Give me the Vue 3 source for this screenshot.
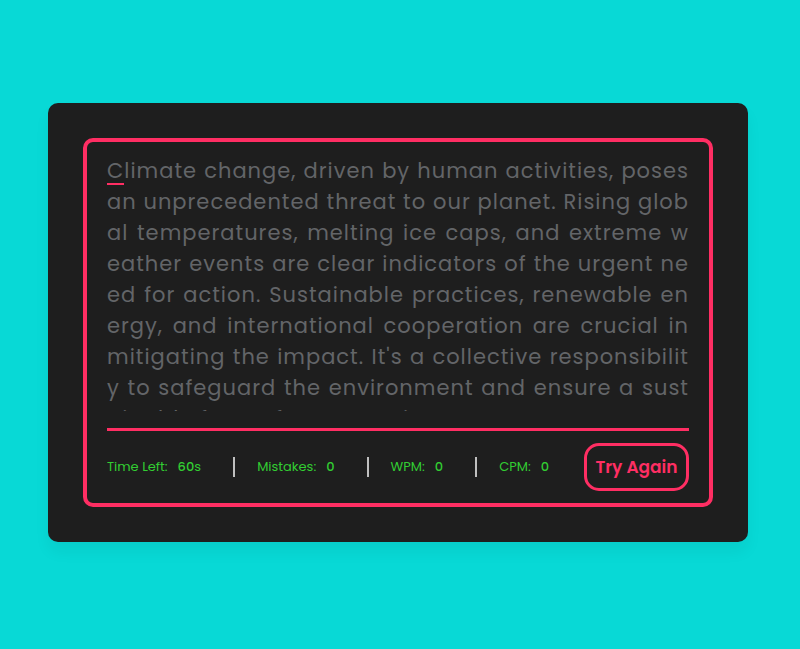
<script setup>
import { ref } from 'vue'

const lines = [
  'Climate change, driven by human activities, poses',
  'an unprecedented threat to our planet. Rising glob',
  'al temperatures, melting ice caps, and extreme w',
  'eather events are clear indicators of the urgent ne',
  'ed for action. Sustainable practices, renewable en',
  'ergy, and international cooperation are crucial in',
  "mitigating the impact. It's a collective responsibilit",
  'y to safeguard the environment and ensure a sust',
  'ainable future for generations to come.'
]

const timeLeft = ref(60)
const mistakes = ref(0)
const wpm = ref(0)
const cpm = ref(0)

function reset() {
  timeLeft.value = 60
  mistakes.value = 0
  wpm.value = 0
  cpm.value = 0
}
</script>

<template>
  <main class="page">
    <section class="wrapper">
      <div class="content-box">
        <p class="typing-text">
          <span v-for="(line, i) in lines" :key="i" class="line"><template v-if="i === 0"><span class="active">{{ line[0] }}</span>{{ line.slice(1) }}</template><template v-else>{{ line }}</template></span>
        </p>
        <div class="content">
          <ul class="result-details">
            <li><span>Time Left:</span><span class="value"><b>{{ timeLeft }}</b>s</span></li>
            <li><span>Mistakes:</span><span class="value"><b>{{ mistakes }}</b></span></li>
            <li><span>WPM:</span><span class="value"><b>{{ wpm }}</b></span></li>
            <li><span>CPM:</span><span class="value"><b>{{ cpm }}</b></span></li>
          </ul>
          <button type="button" class="retry" @click="reset">Try Again</button>
        </div>
      </div>
    </section>
  </main>
</template>

<style>
body {
  margin: 0;
  background: #08d9d6;
}
</style>

<style scoped>
* {
  box-sizing: border-box;
  margin: 0;
  padding: 0;
  font-family: Poppins, "Open Sans", sans-serif;
}

.page {
  display: flex;
  align-items: center;
  justify-content: center;
  min-height: 100vh;
  padding: 0 4px 4px 0;
}

.wrapper {
  width: 100%;
  max-width: 700px;
  padding: 35px;
  border-radius: 10px;
  background: #1e1e1e;
  box-shadow: 0 10px 15px rgba(0, 0, 0, 0.05);
}

.content-box {
  padding: 13px 20px 0;
  border: 4px solid #ff2e63;
  border-radius: 10px;
}

.typing-text {
  max-height: 256px;
  overflow: hidden;
  color: #636568;
  font-size: 21px;
  line-height: 31px;
  letter-spacing: 1px;
}

.line {
  display: block;
  white-space: nowrap;
  text-align: justify;
  text-align-last: justify;
}

.line:last-child {
  text-align-last: left;
}

.active {
  position: relative;
}

.active::before {
  content: "";
  position: absolute;
  left: 0;
  bottom: 0;
  width: 100%;
  height: 2px;
  background: #ff2e63;
}

.content {
  display: flex;
  align-items: center;
  justify-content: space-between;
  margin-top: 17px;
  padding: 12px 0;
  border-top: 3px solid #ff2e63;
}

.result-details {
  display: flex;
  justify-content: space-between;
  width: calc(100% - 140px);
  list-style: none;
  color: #32cd32;
  font-size: 13px;
  line-height: 20px;
}

.result-details li {
  display: flex;
  gap: 10px;
  white-space: nowrap;
}

.result-details li + li {
  padding-left: 22px;
  border-left: 2px solid #bfbfbf;
}

.value b {
  font-weight: 500;
}

.retry {
  width: 105px;
  height: 48px;
  border: 3px solid #ff2e63;
  border-radius: 15px;
  background: none;
  color: #ff2e63;
  font-size: 17px;
  font-weight: 600;
  white-space: nowrap;
  cursor: pointer;
}
</style>
